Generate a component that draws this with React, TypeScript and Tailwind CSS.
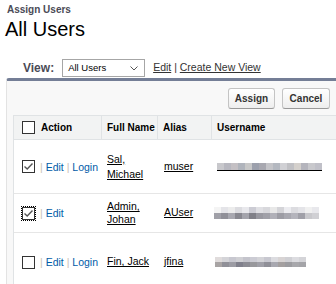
import React from "react";

const r1 = ["#c8c8cc","#b8b8c0","#c4c0c4","#b0b4bc","#c8c8c8","#9ca0ac","#a8a8b0","#c4c4c8","#b4b8c0","#d0d0d4","#c0c0c4","#d4d0cc","#b4b4bc","#c8c8cc","#c0c0c8"];
const r2a = ["#f4f4f4","#e4e4e8","#ececec","#dcdce0","#e8e8ec","#ccccd4","#e0e0e4","#d8d8dc","#e8e8e8","#d4d4d8","#ececf0","#dcdce0","#e4e4e8","#f0f0f0","#e8e8ec"];
const r2b = ["#a0a0a8","#909098","#a8a8b0","#888890","#a4a4ac","#808088","#9898a0","#a0a0a8","#b0b0b8","#9c9ca4","#a8a8b0","#b4b4bc","#a0a0a8","#c8c8cc","#d0d0d4"];
const r3a = ["#e0dcdc","#d4d4d8","#c8c8d0","#d0d0d4","#c4c4cc","#ccccd4","#d4d4d8","#c8c8d0","#dcdce0","#d8d4d4","#d0d0d4","#dcdce0","#d4d4d8"];
const r3b = ["#a8a4a4","#909098","#9c9ca4","#80808c","#8c8c94","#98989c","#a0a0a8","#909098","#a8a8b0","#a4a0a0","#9c9ca0","#a8a8ac","#a4a4a8"];

function Mosaic({ rows, w, h }: { rows: string[][]; w: number; h: number }) {
  return (
    <div className="flex flex-col">
      {rows.map((row, i) => (
        <div key={i} className="flex">
          {row.map((c, j) => (
            <div key={j} style={{ background: c, width: w, height: h }} />
          ))}
        </div>
      ))}
    </div>
  );
}

function Checkbox({ checked, focus }: { checked?: boolean; focus?: boolean }) {
  return (
    <div
      className={
        "w-[13px] h-[13px] shrink-0 border border-[#333] bg-white flex items-center justify-center " +
        (focus ? "outline outline-1 outline-dotted outline-black" : "")
      }
    >
      {checked && (
        <svg width="11" height="11" viewBox="0 0 11 11">
          <path d="M1.5 5.5 L4.2 8 L9.5 2.5" fill="none" stroke="#555" strokeWidth="1.4" />
        </svg>
      )}
    </div>
  );
}

function Actions({ login }: { login?: boolean }) {
  return (
    <div className="text-[10.5px] leading-[12px] whitespace-pre">
      <span className="text-[#c9bfb5]">| </span>
      <span className="text-[#015ba7]">Edit</span>
      {login && (
        <>
          <span className="text-[#c9bfb5]"> | </span>
          <span className="text-[#015ba7]">Login</span>
        </>
      )}
    </div>
  );
}

export default function App() {
  return (
    <div className="w-[336px] h-[284px] overflow-hidden bg-white font-['Liberation_Sans',Arial,sans-serif] text-black">
      <div className="pl-[7px] pt-[4px] text-[10px] leading-[12px] font-bold text-[#4a4a56]">Assign Users</div>
      <div className="pl-[5px] mt-[3px] text-[20px] leading-[20px]">All Users</div>

      <div className="flex items-center mt-[20px] h-[18px] pl-[23px]">
        <span className="text-[12px] font-bold text-[#4a4a56]">View:</span>
        <div className="ml-[8px] w-[83px] h-[18px] border border-[#a6a6a6] bg-white flex items-center justify-between pl-[5px] pr-[6px]">
          <span className="text-[9.5px] text-black">All Users</span>
          <svg width="8" height="5" viewBox="0 0 8 5">
            <path d="M0.5 0.5 L4 4 L7.5 0.5" fill="none" stroke="#555" strokeWidth="1" />
          </svg>
        </div>
        <div className="ml-[8px] text-[10.5px] text-[#333] whitespace-pre">
          <span className="underline">Edit</span>
          <span> | </span>
          <span className="underline">Create New View</span>
        </div>
      </div>

      <div className="mt-[1px] ml-[6px] border-t-[3px] border-t-[#747e96] border-l border-l-[#e3e3e3] bg-[#f8f8f8] rounded-tl-[3px] h-[240px]">
        <div className="flex justify-end gap-[7px] pt-[7px] pr-[6px]">
          <button className="w-[47px] h-[21px] rounded-[3px] border border-[#c4c4c4] border-b-[#999] bg-gradient-to-b from-white to-[#eeeeee] text-[10px] font-bold text-[#333]">Assign</button>
          <button className="w-[48px] h-[21px] rounded-[3px] border border-[#c4c4c4] border-b-[#999] bg-gradient-to-b from-white to-[#eeeeee] text-[10px] font-bold text-[#333]">Cancel</button>
        </div>

        <div className="mt-[6px] ml-[6px]">
          <div className="flex h-[25px] bg-[#f2f3f3] border-t border-b border-l border-[#e0e3e5] text-[10px] font-bold items-stretch">
            <div className="w-[87px] flex items-center pl-[8px] gap-[6px]">
              <Checkbox />
              <span>Action</span>
            </div>
            <div className="w-[56px] border-l border-[#e0e3e5] flex items-center pl-[5px]">Full Name</div>
            <div className="w-[54px] border-l border-[#e0e3e5] flex items-center pl-[5px]">Alias</div>
            <div className="flex-1 border-l border-[#e0e3e5] flex items-center pl-[5px]">Username</div>
          </div>

          <div className="bg-white border-l border-[#e0e3e5] text-[10.5px]">
            <div className="flex items-center h-[54px] border-b border-[#e6e6e6]">
              <div className="w-[87px] flex items-center pl-[8px] gap-[5px]">
                <Checkbox checked />
                <Actions login />
              </div>
              <div className="w-[57px] pl-[6px] pr-[2px] leading-[15px]"><span className="underline">Sal, Michael</span></div>
              <div className="w-[54px] pl-[6px]"><span className="underline">muser</span></div>
              <div className="flex-1 pl-[5px]">
                <div className="w-fit border-b border-black pb-[0px]">
                  <Mosaic rows={[r1]} w={7} h={7} />
                </div>
              </div>
            </div>

            <div className="flex items-center h-[39px] border-b border-[#e6e6e6]">
              <div className="w-[87px] flex items-center pl-[8px] gap-[5px]">
                <Checkbox checked focus />
                <Actions />
              </div>
              <div className="w-[57px] pl-[6px] pr-[2px] leading-[13px]"><span className="underline">Admin, Johan</span></div>
              <div className="w-[54px] pl-[6px]"><span className="underline">AUser</span></div>
              <div className="flex-1 pl-[2px]">
                <Mosaic rows={[r2a, r2b]} w={7} h={6} />
              </div>
            </div>

            <div className="flex items-center h-[58px]">
              <div className="w-[87px] flex items-center pl-[8px] gap-[5px]">
                <Checkbox />
                <Actions login />
              </div>
              <div className="w-[57px] pl-[6px] pr-[2px]"><span className="underline">Fin, Jack</span></div>
              <div className="w-[54px] pl-[6px]"><span className="underline">jfina</span></div>
              <div className="flex-1 pl-[3px]">
                <Mosaic rows={[r3a, r3b]} w={7} h={5} />
              </div>
            </div>
          </div>
        </div>
      </div>
    </div>
  );
}
